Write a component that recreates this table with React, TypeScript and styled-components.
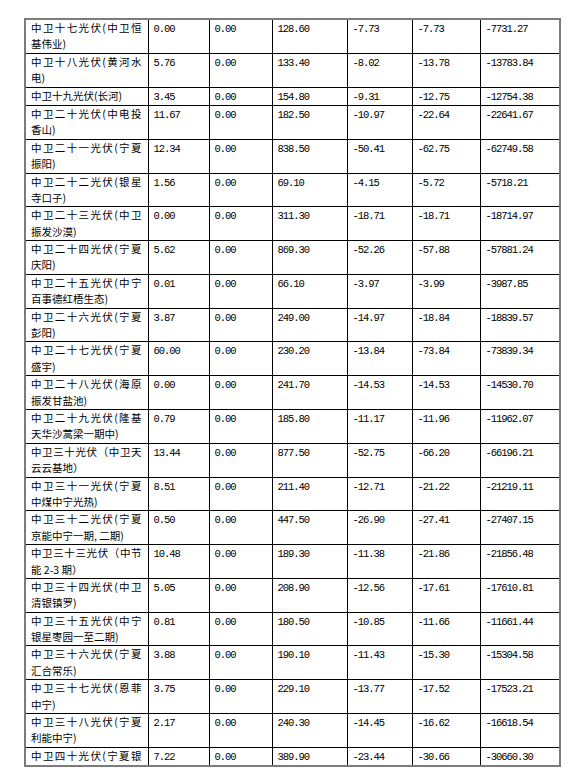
import React from "react";
import styled, { createGlobalStyle } from "styled-components";

type Row = {
  name: string[];
  values: string[];
};

const rows: Row[] = [
  { name: ["中卫十七光伏(中卫恒", "基伟业)"], values: ["0.00", "0.00", "128.60", "-7.73", "-7.73", "-7731.27"] },
  { name: ["中卫十八光伏(黄河水", "电)"], values: ["5.76", "0.00", "133.40", "-8.02", "-13.78", "-13783.84"] },
  { name: ["中卫十九光伏(长河)"], values: ["3.45", "0.00", "154.80", "-9.31", "-12.75", "-12754.38"] },
  { name: ["中卫二十光伏(中电投", "香山)"], values: ["11.67", "0.00", "182.50", "-10.97", "-22.64", "-22641.67"] },
  { name: ["中卫二十一光伏(宁夏", "振阳)"], values: ["12.34", "0.00", "838.50", "-50.41", "-62.75", "-62749.58"] },
  { name: ["中卫二十二光伏(银星", "寺口子)"], values: ["1.56", "0.00", "69.10", "-4.15", "-5.72", "-5718.21"] },
  { name: ["中卫二十三光伏(中卫", "振发沙漠)"], values: ["0.00", "0.00", "311.30", "-18.71", "-18.71", "-18714.97"] },
  { name: ["中卫二十四光伏(宁夏", "庆阳)"], values: ["5.62", "0.00", "869.30", "-52.26", "-57.88", "-57881.24"] },
  { name: ["中卫二十五光伏(中宁", "百事德红梧生态)"], values: ["0.01", "0.00", "66.10", "-3.97", "-3.99", "-3987.85"] },
  { name: ["中卫二十六光伏(宁夏", "彭阳)"], values: ["3.87", "0.00", "249.00", "-14.97", "-18.84", "-18839.57"] },
  { name: ["中卫二十七光伏(宁夏", "盛宇)"], values: ["60.00", "0.00", "230.20", "-13.84", "-73.84", "-73839.34"] },
  { name: ["中卫二十八光伏(海原", "振发甘盐池)"], values: ["0.00", "0.00", "241.70", "-14.53", "-14.53", "-14530.70"] },
  { name: ["中卫二十九光伏(隆基", "天华沙蒿梁一期中)"], values: ["0.79", "0.00", "185.80", "-11.17", "-11.96", "-11962.07"] },
  { name: ["中卫三十光伏（中卫天", "云云基地）"], values: ["13.44", "0.00", "877.50", "-52.75", "-66.20", "-66196.21"] },
  { name: ["中卫三十一光伏(宁夏", "中煤中宁光热)"], values: ["8.51", "0.00", "211.40", "-12.71", "-21.22", "-21219.11"] },
  { name: ["中卫三十二光伏(宁夏", "京能中宁一期, 二期)"], values: ["0.50", "0.00", "447.50", "-26.90", "-27.41", "-27407.15"] },
  { name: ["中卫三十三光伏（中节", "能 2-3 期）"], values: ["10.48", "0.00", "189.30", "-11.38", "-21.86", "-21856.48"] },
  { name: ["中卫三十四光伏(中卫", "清银镇罗)"], values: ["5.05", "0.00", "208.90", "-12.56", "-17.61", "-17610.81"] },
  { name: ["中卫三十五光伏(中宁", "银星枣园一至二期)"], values: ["0.81", "0.00", "180.50", "-10.85", "-11.66", "-11661.44"] },
  { name: ["中卫三十六光伏(宁夏", "汇合常乐)"], values: ["3.88", "0.00", "190.10", "-11.43", "-15.30", "-15304.58"] },
  { name: ["中卫三十七光伏(恩菲", "中宁)"], values: ["3.75", "0.00", "229.10", "-13.77", "-17.52", "-17523.21"] },
  { name: ["中卫三十八光伏(宁夏", "利能中宁)"], values: ["2.17", "0.00", "240.30", "-14.45", "-16.62", "-16618.54"] },
  // page ends here, the rest of this row is on the next page
  { name: ["中卫四十光伏(宁夏银", ""], values: ["7.22", "0.00", "389.90", "-23.44", "-30.66", "-30660.30"] },
];

const colWidths = [123, 61, 63, 75, 65, 68, 80];

export default function App() {
  return (
    <>
      <GlobalStyle />
      <Page>
        <Table>
          <colgroup>
            {colWidths.map((w, i) => (
              <col key={i} style={{ width: w }} />
            ))}
          </colgroup>
          <tbody>
            {rows.map((row, i) => (
              <tr key={i}>
                <NameCell>
                  {row.name.map((line, j) =>
                    line ? (
                      <NameLine key={j} justify={row.name.length > 1 && j === 0}>
                        {line}
                      </NameLine>
                    ) : null
                  )}
                </NameCell>
                {row.values.map((v, j) => (
                  <NumCell key={j}>{v}</NumCell>
                ))}
              </tr>
            ))}
          </tbody>
        </Table>
      </Page>
    </>
  );
}

const GlobalStyle = createGlobalStyle`
  html, body {
    margin: 0;
    padding: 0;
    background: #fff;
  }
  body {
    font-family: "Noto Sans CJK SC", "Liberation Serif", serif;
    color: #000;
  }
`;

const Page = styled.div`
  width: 587px;
  height: 784px;
  overflow: hidden;
  padding: 18px 0 0 24px;
  box-sizing: border-box;
`;

const Table = styled.table`
  border-collapse: collapse;
  table-layout: fixed;
  width: 536px;
  border: 2px solid #7c7c7c;
`;

const Cell = styled.td`
  border: 1px solid #000;
  vertical-align: top;
  padding: 0 6px 0 5px;
  font-size: 10.5px;
  line-height: 16.4px;
  white-space: nowrap;
  overflow: hidden;
`;

const NameCell = styled(Cell)`
  font-family: "Noto Sans CJK SC", sans-serif;
`;

const NameLine = styled.div<{ justify?: boolean }>`
  text-align: ${(p) => (p.justify ? "justify" : "left")};
  text-align-last: ${(p) => (p.justify ? "justify" : "left")};
  height: 16.4px;
`;

const NumCell = styled(Cell)`
  font-family: "Liberation Mono", monospace;
  letter-spacing: -1.05px;
  padding-top: 1px;
  height: 16.4px;
`;
